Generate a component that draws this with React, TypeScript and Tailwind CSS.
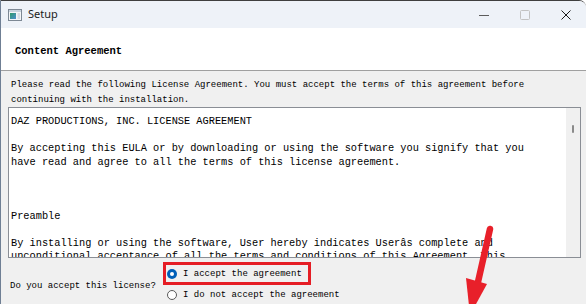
import React from 'react';

const mono = { fontFamily: '"Liberation Mono", "DejaVu Sans Mono", monospace' };

const licenseLines = [
    'DAZ PRODUCTIONS, INC. LICENSE AGREEMENT',
    '',
    'By accepting this EULA or by downloading or using the software you signify that you',
    'have read and agree to all the terms of this license agreement.',
    '',
    '',
    '',
    'Preamble',
    '',
    'By installing or using the software, User hereby indicates Userâs complete and',
    'unconditional acceptance of all the terms and conditions of this Agreement. This',
];

const AppIcon = () => (
    <svg width="14" height="12" viewBox="0 0 14 12">
        <rect x="0.5" y="0.5" width="13" height="11" fill="#f4f6f8" stroke="#7d8894" />
        <rect x="1" y="1" width="12" height="2" fill="#c9d3de" />
        <defs>
            <linearGradient id="ic" x1="0" y1="0" x2="1" y2="1">
                <stop offset="0" stopColor="#2f9a6a" />
                <stop offset="1" stopColor="#4d8fd0" />
            </linearGradient>
        </defs>
        <rect x="2" y="4" width="6" height="6" fill="url(#ic)" />
        <rect x="9.5" y="4" width="2.5" height="6" fill="#d7dde4" />
    </svg>
);

export default function App() {
    return (
        <div className="relative w-[586px] h-[304px] overflow-hidden bg-white">
            <div className="flex h-full flex-col border-l border-t border-l-[#6f7f94] border-t-[#3f3f3f] rounded-tr-[7px] overflow-hidden">
                {/* title bar */}
                <div className="flex h-[28px] items-center bg-[#eef2f8]">
                    <div className="flex items-center pl-[7px]">
                        <AppIcon />
                        <span
                            className="ml-[6px] text-[11px] text-[#1b1b1b]"
                            style={{ fontFamily: '"Noto Sans", "Open Sans", sans-serif' }}
                        >
                            Setup
                        </span>
                    </div>
                    <div className="flex-1" />
                    <div className="flex h-full w-[41px] items-center justify-center">
                        <svg width="10" height="10" viewBox="0 0 10 10">
                            <line x1="0" y1="5.5" x2="10" y2="5.5" stroke="#5c5c5c" strokeWidth="1" />
                        </svg>
                    </div>
                    <div className="flex h-full w-[41px] items-center justify-center">
                        <svg width="10" height="10" viewBox="0 0 10 10">
                            <rect x="0.5" y="0.5" width="9" height="9" rx="1" fill="none" stroke="#c2c2c2" />
                        </svg>
                    </div>
                    <div className="flex h-full w-[41px] items-center justify-center">
                        <svg width="10" height="10" viewBox="0 0 10 10">
                            <path d="M0.5 0.5 L9.5 9.5 M9.5 0.5 L0.5 9.5" stroke="#1a1a1a" strokeWidth="1" />
                        </svg>
                    </div>
                </div>

                {/* page heading */}
                <div className="flex h-[44px] items-center border-b border-[#a0a0a0] bg-white pl-[14px] pt-[6px]">
                    <span className="text-[10.5px] font-bold text-black" style={mono}>
                        Content Agreement
                    </span>
                </div>

                {/* body */}
                <div className="flex flex-1 flex-col bg-[#f0f0f0] pt-[7px]" style={mono}>
                    <p className="pl-[10px] text-[9px] leading-[14.5px] text-black whitespace-pre">
                        {'Please read the following License Agreement. You must accept the terms of this agreement before\ncontinuing with the installation.'}
                    </p>

                    <div className="ml-[7px] flex h-[151px] w-[573px] border border-[#8a8e95] bg-white">
                        <div className="flex-1 overflow-hidden pl-[2px] pt-[7px] text-[10.3px] leading-[13.5px] text-black">
                            {licenseLines.map((line, i) => (
                                <div key={i} className="h-[13.5px] whitespace-pre">
                                    {line}
                                </div>
                            ))}
                        </div>
                        <div className="w-[14px] bg-[#f0f0f0] pt-[17px] pl-[6px]">
                            <div className="h-[8px] w-[2px] rounded-full bg-[#8a8a8a]" />
                        </div>
                    </div>

                    <div className="flex items-start pt-[4px]">
                        <div className="mt-[17px] w-[162px] pl-[9px] text-[9px] leading-[15px] text-black">
                            Do you accept this license?
                        </div>
                        <div className="flex flex-col">
                            <div className="flex h-[23px] w-[148px] items-center gap-[6px] border-[3px] border-[#e51d25] pl-[1px] pt-[1px]">
                                <span className="flex h-[10px] w-[10px] items-center justify-center rounded-full bg-[#005fb8]">
                                    <span className="h-[4px] w-[4px] rounded-full bg-white" />
                                </span>
                                <span className="text-[9px] leading-[15px] text-black">I accept the agreement</span>
                            </div>
                            <div className="flex h-[19px] items-center gap-[6px] pl-[4px] pt-[1px]">
                                <span className="h-[10px] w-[10px] rounded-full border border-[#5a5a5a] bg-white" />
                                <span className="text-[9px] leading-[15px] text-black">I do not accept the agreement</span>
                            </div>
                        </div>
                    </div>
                </div>
            </div>

            {/* red annotation arrow */}
            <svg className="pointer-events-none absolute left-[455px] top-[220px]" width="45" height="90" viewBox="0 0 45 90">
                <line x1="35" y1="9" x2="23" y2="62" stroke="#e8202a" strokeWidth="6.5" strokeLinecap="round" />
                <polygon points="11,58 32,64 15,95" fill="#e8202a" />
            </svg>
        </div>
    );
}
